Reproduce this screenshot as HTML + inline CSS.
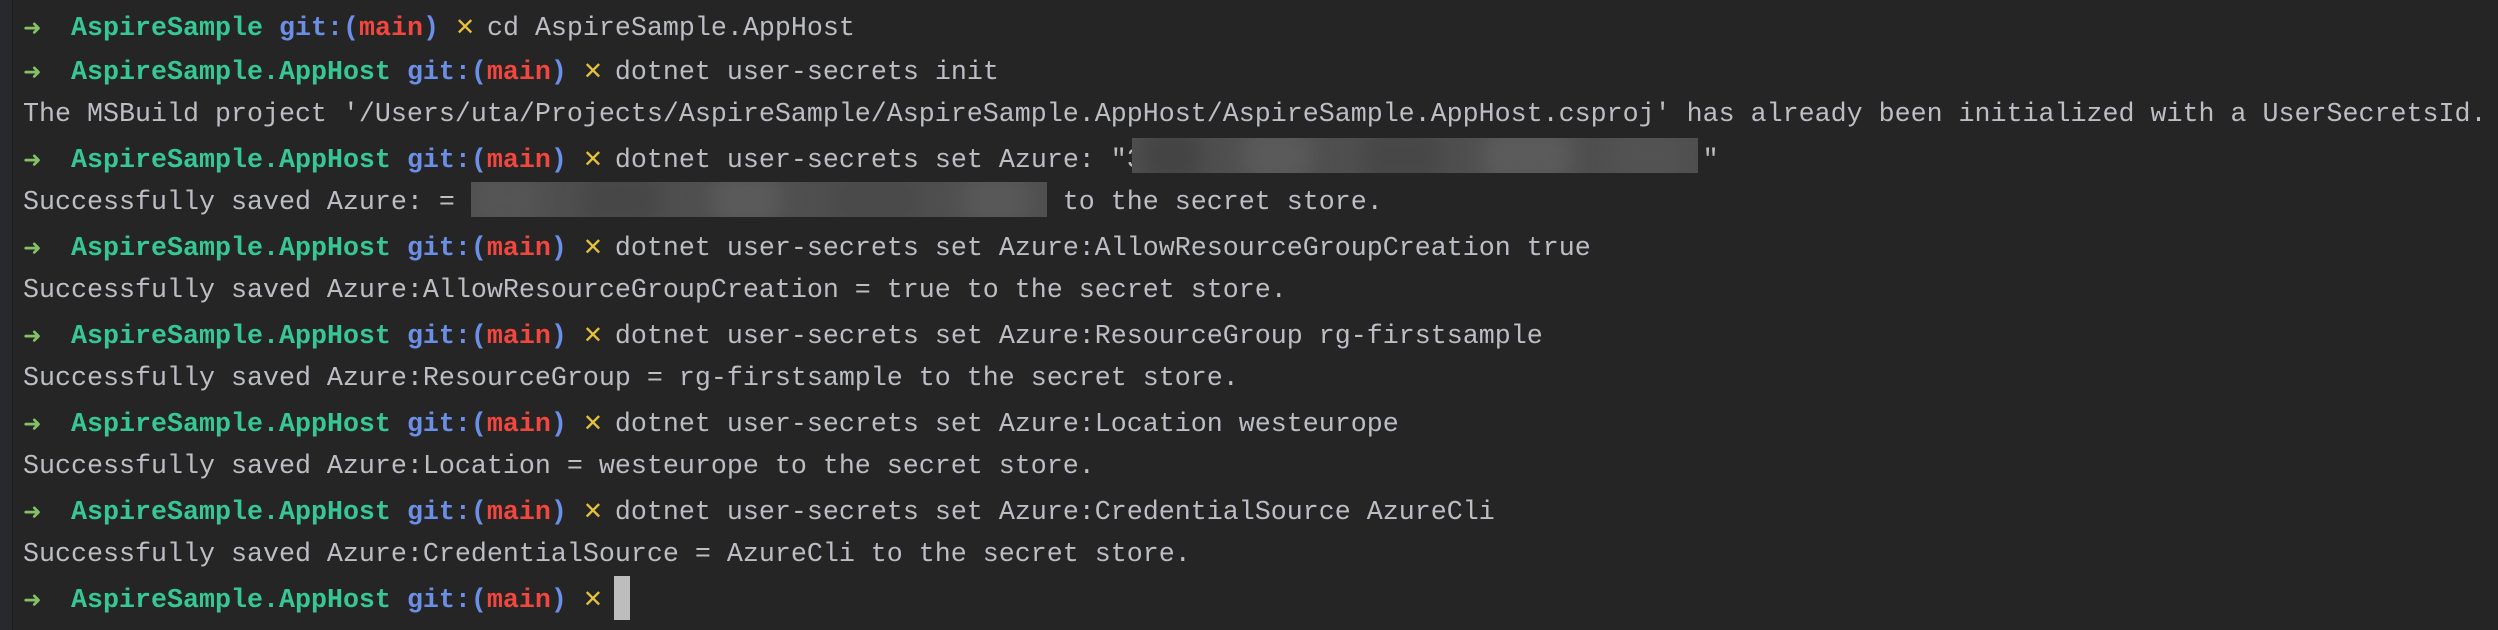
<!DOCTYPE html>
<html><head><meta charset="utf-8"><style>
html,body{margin:0;padding:0}
body{width:2498px;height:630px;background:#252525;position:relative;overflow:hidden;font-family:"Liberation Mono","DejaVu Sans Mono",monospace;font-size:26.67px;color:#bcbec4}
.strip{position:absolute;left:0;top:0;width:12px;height:630px;background:#27292c;border-right:1px solid #1c1c1c}
.l{position:absolute;left:23px;height:44px;line-height:44px;white-space:pre}
.a{display:inline-block;width:16px;color:#84c267;font-family:"DejaVu Sans",sans-serif;font-size:22px;font-weight:bold;text-align:left}
.d{color:#37c795;font-weight:bold}
.g{color:#6b8ee6;font-weight:bold}
.r{color:#f2473f;font-weight:bold}
.x{display:inline-block;width:16px;text-align:center;color:#e6c13a;font-family:"DejaVu Sans",sans-serif;font-size:24px;font-weight:bold}
.blur{position:absolute;overflow:hidden;background:#4f4f4f}
.blur i{position:absolute;top:-10px;bottom:-10px;filter:blur(10px);border-radius:20px}
.cur{position:absolute;left:614px;top:576px;width:16px;height:44px;background:#bdbdbd}
</style></head><body>
<div class="strip"></div>
<div class="l" style="top:5px"><span class="a">➜</span>  <span class="d">AspireSample</span> <span class="g">git:(</span><span class="r">main</span><span class="g">)</span> <span class="x">✕</span> cd AspireSample.AppHost</div>
<div class="l" style="top:49px"><span class="a">➜</span>  <span class="d">AspireSample.AppHost</span> <span class="g">git:(</span><span class="r">main</span><span class="g">)</span> <span class="x">✕</span> dotnet user-secrets init</div>
<div class="l" style="top:93px">The MSBuild project '/Users/uta/Projects/AspireSample/AspireSample.AppHost/AspireSample.AppHost.csproj' has already been initialized with a UserSecretsId.</div>
<div class="l" style="top:137px"><span class="a">➜</span>  <span class="d">AspireSample.AppHost</span> <span class="g">git:(</span><span class="r">main</span><span class="g">)</span> <span class="x">✕</span> dotnet user-secrets set Azure: "3                                   "</div>
<div class="l" style="top:181px">Successfully saved Azure: =                                      to the secret store.</div>
<div class="l" style="top:225px"><span class="a">➜</span>  <span class="d">AspireSample.AppHost</span> <span class="g">git:(</span><span class="r">main</span><span class="g">)</span> <span class="x">✕</span> dotnet user-secrets set Azure:AllowResourceGroupCreation true</div>
<div class="l" style="top:269px">Successfully saved Azure:AllowResourceGroupCreation = true to the secret store.</div>
<div class="l" style="top:313px"><span class="a">➜</span>  <span class="d">AspireSample.AppHost</span> <span class="g">git:(</span><span class="r">main</span><span class="g">)</span> <span class="x">✕</span> dotnet user-secrets set Azure:ResourceGroup rg-firstsample</div>
<div class="l" style="top:357px">Successfully saved Azure:ResourceGroup = rg-firstsample to the secret store.</div>
<div class="l" style="top:401px"><span class="a">➜</span>  <span class="d">AspireSample.AppHost</span> <span class="g">git:(</span><span class="r">main</span><span class="g">)</span> <span class="x">✕</span> dotnet user-secrets set Azure:Location westeurope</div>
<div class="l" style="top:445px">Successfully saved Azure:Location = westeurope to the secret store.</div>
<div class="l" style="top:489px"><span class="a">➜</span>  <span class="d">AspireSample.AppHost</span> <span class="g">git:(</span><span class="r">main</span><span class="g">)</span> <span class="x">✕</span> dotnet user-secrets set Azure:CredentialSource AzureCli</div>
<div class="l" style="top:533px">Successfully saved Azure:CredentialSource = AzureCli to the secret store.</div>
<div class="l" style="top:577px"><span class="a">➜</span>  <span class="d">AspireSample.AppHost</span> <span class="g">git:(</span><span class="r">main</span><span class="g">)</span> <span class="x">✕</span> </div>
<div class="blur" style="left:1132px;top:138px;width:566px;height:35px"><i style="left:10px;width:60px;background:#444"></i><i style="left:110px;width:70px;background:#5a5a5a"></i><i style="left:230px;width:80px;background:#474747"></i><i style="left:350px;width:90px;background:#5b5b5b"></i><i style="left:480px;width:70px;background:#535353"></i></div>
<div class="blur" style="left:471px;top:182px;width:576px;height:35px"><i style="left:0;width:70px;background:#555"></i><i style="left:110px;width:80px;background:#474747"></i><i style="left:240px;width:70px;background:#5a5a5a"></i><i style="left:360px;width:90px;background:#4a4a4a"></i><i style="left:490px;width:70px;background:#585858"></i></div>
<div class="cur"></div>
</body></html>
